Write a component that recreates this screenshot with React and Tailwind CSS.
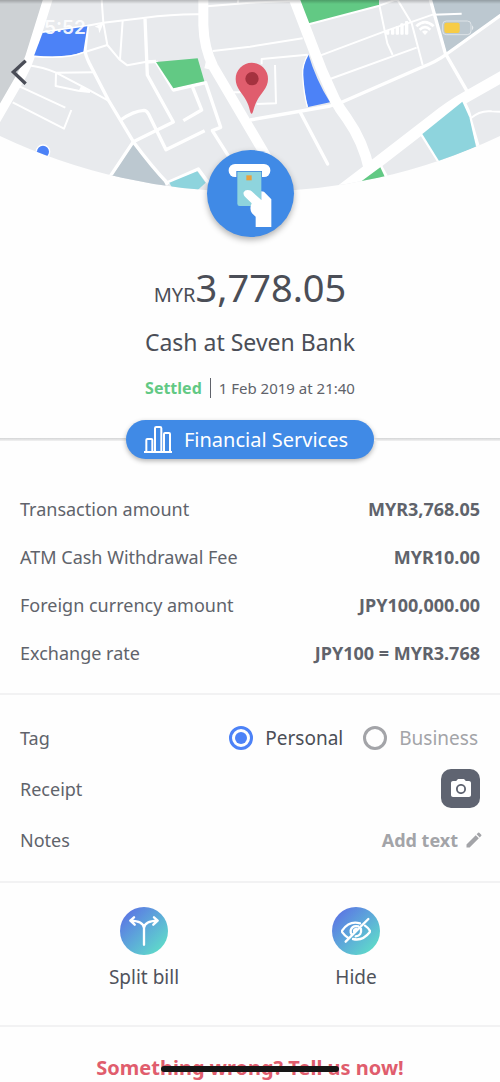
import React, { useState } from "react";
import { MdPhotoCamera, MdEdit } from "react-icons/md";

function CityMap() {
  return (
    <svg viewBox="0 0 1500 576" className="block h-auto w-full" aria-hidden="true">
      <defs>
        <clipPath id="dome">
          <path d="M0 0H1500V408A1758 1758 0 0 1 0 408Z" />
        </clipPath>
        <linearGradient id="topShade" x1="0" y1="0" x2="0" y2="1">
          <stop offset="0" stopColor="#000" stopOpacity="0.22" />
          <stop offset="1" stopColor="#000" stopOpacity="0" />
        </linearGradient>
      </defs>
      <g clipPath="url(#dome)">
        <rect width="1500" height="576" fill="#e8eaed" />
        <path d="M0 0H135L80 190L0 330Z" fill="#cdd1d4" />
        <path d="M1292 0H1500V45L1340 160Z" fill="#bcc8d0" />
        <path d="M897 0H1137V17L918 74Z" fill="#62c984" />
        <path d="M398 432L335 528L490 570L500 550Z" fill="#bcc8d0" />

        <g fill="none" stroke="#fff" strokeLinejoin="round">
          <g strokeWidth="6">
            <path d="M128 97L262 77L310 68L430 54Q520 42 600 43" />
            <path d="M305 0L310 68L322 135L358 178L382 196L440 185" />
            <path d="M368 62L360 178M255 156L322 135" />
            <path d="M85 196Q130 202 168 218L284 217M168 220L167 258L235 272L270 276M168 218L265 269L325 302" />
            <path d="M60 260L196 323M38 307L192 386L214 330" />
            <path d="M622 19L750 8L872 3M715 0L713 10M638 153L750 140L908 115M700 277H722" />
            <path d="M922 164L785 177V193M825 195L828 310L770 312" />
            <path d="M918 75L1138 17L1195 -4M1138 15L1162 130L1178 165M1190 -5L1235 70L1268 195" />
            <path d="M960 167L1160 92L1298 44L1385 41M990 237L1250 143" />
            <path d="M1412 355Q1440 330 1475 334L1500 335" />
          </g>
          <path d="M236 272L244 257L270 276Z" fill="#fff" stroke="none" />
          <path d="M284 80L312 66L298 100L295 84Z" fill="#fff" stroke="none" />
          <g strokeWidth="10">
            <path d="M262 80L255 150Q256 165 268 190L325 300L400 425Q455 500 505 552" />
            <path d="M435 56L442 225L520 366L400 425L330 530" />
            <path d="M362 360Q400 333 432 331Q440 331 446 343L498 449L614 392" />
            <path d="M578 262L605 330L550 362M440 186L468 184M468 184L520 270L617 248L662 382L637 392L690 475" />
            <path d="M495 551L595 507L625 548" />
            <path d="M1290 -5L1336 160L1402 275" />
            <path d="M1520 33L1340 162Q1310 185 1260 204L1025 307L990 318L750 360" />
            <path d="M900 335L983 492" strokeLinecap="round" />
            <path d="M1262 398L1320 490M1388 300Q1408 332 1412 362L1436 445M1140 495L1162 535" />
          </g>
          <path d="M146 -10L90 170Q82 195 66 224L-15 365" strokeWidth="28" />
          <path d="M610 -5V75Q612 145 640 200L805 480" strokeWidth="30" />
          <path d="M630 160L620 206" strokeWidth="14" />
          <path d="M878 -15L930 120Q962 210 1005 300Q1018 325 1040 354Q1090 425 1108 510" strokeWidth="32" />
          <path d="M1520 222L1400 290Q1350 318 1300 358L1120 497L985 600" strokeWidth="34" />
        </g>

        <path d="M128 99L262 79L250 155Q200 176 102 167Z" fill="#4c82f7" />
        <path d="M102 169Q200 178 252 157" fill="none" stroke="#fff" strokeWidth="5" />
        <path d="M468 186L593 175L613 244L520 265Z" fill="#62c984" />
        <path d="M925 162Q906 195 908 225Q911 280 924 321L990 307Q948 240 925 162Z" fill="#4c82f7" />
        <path d="M925 162Q906 195 908 225Q911 280 922 321" fill="none" stroke="#fff" strokeWidth="4" />
        <path d="M508 548L592 514L617 548L590 573L520 570Z" fill="#8ed4dd" />
        <path d="M1387 305L1267 402L1319 486L1428 440L1408 352Z" fill="#8ed4dd" />
        <path d="M1078 548L1141 502L1155 532L1120 550Z" fill="#62c984" />
        <circle cx="129" cy="455" r="20" fill="#4c82f7" stroke="#fff" strokeWidth="4" />
      </g>
      <path
        d="M755 341C750 341 750 322 739 302C728 280 707 264 707 237A48.500 48.500 0 0 1 804 237C804 264 782 280 771 302C760 322 760 341 755 341Z"
        fill="#e05d6d"
      />
      <circle cx="756" cy="236" r="20" fill="#a5323f" />
      <rect width="1500" height="12" fill="url(#topShade)" />
    </svg>
  );
}

function StatusBar() {
  return (
    <div className="absolute inset-x-0 top-4 flex items-center justify-between pr-[26px] pl-11 text-white">
      <span className="font-['Inter',sans-serif] text-[19px] leading-6 font-semibold opacity-90">5:52</span>
      <svg viewBox="0 0 264 48" className="h-4 w-[88px]" aria-hidden="true">
        <g fill="#fff">
          <rect x="0" y="32" width="10" height="12" rx="3" />
          <rect x="15" y="26" width="10" height="18" rx="3" />
          <rect x="29" y="18" width="10" height="26" rx="3" />
          <rect x="43" y="10" width="10" height="34" rx="3" />
          <rect x="57" y="3" width="10" height="41" rx="3" />
        </g>
        <g fill="none" stroke="#fff" strokeWidth="8">
          <path d="M91 19Q117 -6 143 19" />
          <path d="M101 29Q117 14 133 29" />
        </g>
        <path d="M108 35Q117 28 126 35L117 45Z" fill="#fff" />
        <rect x="170" y="3" width="85" height="41" rx="11" fill="none" stroke="#fff" strokeOpacity="0.5" strokeWidth="3" />
        <rect x="175" y="8" width="46" height="31" rx="6" fill="#f7cc46" />
        <path d="M258 16Q266 23 258 31Z" fill="#fff" fillOpacity="0.6" />
      </svg>
    </div>
  );
}

function CashIcon() {
  return (
    <svg viewBox="0 0 261 261" className="size-[87px]" aria-hidden="true">
      <rect x="65" y="42" width="125" height="39" rx="19" fill="#fff" />
      <path d="M88 63H165V81H88Z" fill="#3d84de" />
      <path d="M91 65H163V150L145 168H98Q91 168 91 161Z" fill="#8ed4dd" />
      <rect x="118" y="76" width="16" height="15" fill="#e9a03b" />
      <path
        d="M127 121Q115 118 110 127Q108 134 114 140L134 160Q126 177 135 190L146 200V231H193V148L171 125L163 124V150L134 124Q131 121 127 121Z"
        fill="#fff"
      />
    </svg>
  );
}

const amounts = [
  ["Transaction amount", "MYR3,768.05"],
  ["ATM Cash Withdrawal Fee", "MYR10.00"],
  ["Foreign currency amount", "JPY100,000.00"],
  ["Exchange rate", "JPY100 = MYR3.768"],
];

function TagOption({ value, checked, onChange }) {
  return (
    <label className={checked ? "flex items-center gap-3 text-[#4b4e57]" : "flex items-center gap-3 text-[#a3a4a8]"}>
      <input
        type="radio"
        name="tag"
        value={value}
        checked={checked}
        onChange={onChange}
        className="size-6 appearance-none rounded-full border-[3px] border-[#a3a4a8] bg-clip-content p-[3px] checked:border-[#4c82f7] checked:bg-[#4c82f7]"
      />
      {value}
    </label>
  );
}

function Action({ label, children }) {
  return (
    <button type="button" className="flex flex-1 flex-col items-center gap-2 text-[#50535c]">
      <span className="flex size-12 items-center justify-center rounded-full bg-linear-to-br from-[#5c7be2] from-15% to-[#5fdcc8] to-90%">
        {children}
      </span>
      <span className="text-[19px] leading-7">{label}</span>
    </button>
  );
}

export default function App() {
  const [tag, setTag] = useState("Personal");
  return (
    <main className="relative w-full overflow-hidden bg-[#fefefe] font-['Noto_Sans',sans-serif] text-[18px] leading-6 text-[#60636b]">
      <header className="relative flex flex-col items-center">
        <CityMap />
        <StatusBar />
        <button type="button" aria-label="Back" className="absolute top-[58px] left-2">
          <svg viewBox="0 0 72 84" className="h-7 w-6" fill="none" stroke="#4a4d57" strokeWidth="10" aria-hidden="true">
            <path d="M53 8L16 42L53 77" />
          </svg>
        </button>
        <div className="relative -mt-[42px] size-[87px] rounded-full bg-[#408ae6] shadow-[0_3px_6px_rgba(0,0,0,0.3)]">
          <CashIcon />
        </div>
        <h1 className="mt-6 text-[38px] leading-[52px] text-[#4b4e57]">
          <span className="text-[20px]">MYR</span>3,778.05
        </h1>
        <p className="mt-[5px] text-[23px] leading-8 text-[#4b4e57]">Cash at Seven Bank</p>
        <p className="mt-[18px] flex items-center text-[15px]">
          <span className="mr-2 border-r border-[#60636b] pr-2 text-[16px] leading-5 font-bold text-[#62c984]">Settled</span>
          1 Feb 2019 at 21:40
        </p>
        <div className="mt-5 flex w-full items-center">
          <span className="h-[3px] flex-1 bg-linear-to-b from-[#d4d5d6] to-[#f2f2f2]" />
          <span className="flex h-[39px] items-center gap-3 rounded-full bg-[#408ae6] pr-[26px] pl-[18px] text-[20px] text-white shadow-[0_2px_5px_rgba(0,0,0,0.3)]">
            <svg viewBox="0 0 84 81" className="h-[27px] w-7" fill="none" stroke="#fff" strokeWidth="6" strokeLinejoin="round" aria-hidden="true">
              <path d="M0 78H84M7 76V42Q7 39 10 39H22Q25 39 25 42V76M33 76V7Q33 3 37 3H48Q52 3 52 7V76M60 76V24Q60 21 63 21H75Q78 21 78 24V76" />
            </svg>
            Financial Services
          </span>
          <span className="h-[3px] flex-1 bg-linear-to-b from-[#d4d5d6] to-[#f2f2f2]" />
        </div>
      </header>

      <dl className="flex flex-col gap-6 border-b-2 border-[#f2f2f3] px-5 pt-[38px] pb-7">
        {amounts.map(([label, value]) => (
          <div key={label} className="flex justify-between">
            <dt>{label}</dt>
            <dd className="font-bold">{value}</dd>
          </div>
        ))}
      </dl>

      <section className="flex flex-col gap-3 border-b-2 border-[#f2f2f3] px-5 pt-[23px] pb-[22px]">
        <div role="radiogroup" aria-labelledby="tag-title" className="flex h-[39px] items-center justify-between">
          <span id="tag-title">Tag</span>
          <div className="flex gap-5 pr-0.5 text-[19px]">
            <TagOption value="Personal" checked={tag === "Personal"} onChange={() => setTag("Personal")} />
            <TagOption value="Business" checked={tag === "Business"} onChange={() => setTag("Business")} />
          </div>
        </div>
        <div className="flex h-[39px] items-center justify-between">
          <span>Receipt</span>
          <button type="button" aria-label="Add receipt photo" className="flex size-[39px] items-center justify-center rounded-[10px] bg-[#5f6471]">
            <MdPhotoCamera className="size-6 text-white" />
          </button>
        </div>
        <div className="flex h-[39px] items-center justify-between">
          <span>Notes</span>
          <button type="button" className="-mr-1 flex items-center gap-1.5 font-bold text-[#a3a4a8]">
            Add text
            <MdEdit className="size-5" />
          </button>
        </div>
      </section>

      <section className="flex border-b-2 border-[#f2f2f3] px-[38px] pt-6 pb-[34px]">
        <Action label="Split bill">
          <svg viewBox="0 0 90 90" className="size-[30px]" fill="none" stroke="#fff" strokeWidth="7" strokeLinecap="round" strokeLinejoin="round" aria-hidden="true">
            <path d="M45 86V36Q43 15 4 14M45 36Q47 15 86 14M15 4L4 14L17 26M75 4L86 14L73 26" />
          </svg>
        </Action>
        <Action label="Hide">
          <svg viewBox="0 0 90 90" className="size-[30px]" fill="none" stroke="#fff" strokeWidth="7" strokeLinecap="round" aria-hidden="true">
            <path d="M57 22Q25 13 4 43Q2 46 4 49Q12 60 21 65M72 29Q82 36 86 43Q88 46 86 49Q65 76 36 69" />
            <path d="M52 31Q34 27 29 43Q28 50 32 55M60 39Q63 59 44 61M39 46Q39 40 46 39" />
            <path d="M82 9L14 77" />
          </svg>
        </Action>
      </section>

      <footer className="relative flex justify-center pt-7 pb-px">
        <a href="#support" className="text-[20px] leading-[26px] font-bold text-[#e05d6d]">
          Something wrong? Tell us now!
        </a>
        <span className="absolute bottom-[10px] left-1/2 h-[6px] w-[178px] -translate-x-1/2 rounded-full bg-[#161616]" />
      </footer>
    </main>
  );
}
